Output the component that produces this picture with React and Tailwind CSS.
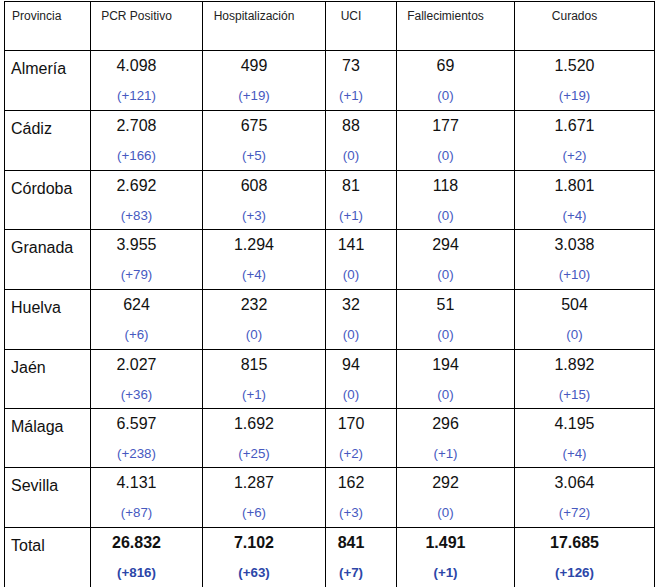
import React from 'react';

const headers = ['PCR Positivo', 'Hospitalización', 'UCI', 'Fallecimientos', 'Curados'];

const rows = [
    { name: 'Almería', h: 'h-[60px]', cells: [['4.098', '+121'], ['499', '+19'], ['73', '+1'], ['69', '0'], ['1.520', '+19']] },
    { name: 'Cádiz', h: 'h-[60px]', cells: [['2.708', '+166'], ['675', '+5'], ['88', '0'], ['177', '0'], ['1.671', '+2']] },
    { name: 'Córdoba', h: 'h-[59px]', cells: [['2.692', '+83'], ['608', '+3'], ['81', '+1'], ['118', '0'], ['1.801', '+4']] },
    { name: 'Granada', h: 'h-[60px]', cells: [['3.955', '+79'], ['1.294', '+4'], ['141', '0'], ['294', '0'], ['3.038', '+10']] },
    { name: 'Huelva', h: 'h-[60px]', cells: [['624', '+6'], ['232', '0'], ['32', '0'], ['51', '0'], ['504', '0']] },
    { name: 'Jaén', h: 'h-[59px]', cells: [['2.027', '+36'], ['815', '+1'], ['94', '0'], ['194', '0'], ['1.892', '+15']] },
    { name: 'Málaga', h: 'h-[59px]', cells: [['6.597', '+238'], ['1.692', '+25'], ['170', '+2'], ['296', '+1'], ['4.195', '+4']] },
    { name: 'Sevilla', h: 'h-[60px]', cells: [['4.131', '+87'], ['1.287', '+6'], ['162', '+3'], ['292', '0'], ['3.064', '+72']] },
];

const total = [['26.832', '+816'], ['7.102', '+63'], ['841', '+7'], ['1.491', '+1'], ['17.685', '+126']];

const cell = 'border-l border-t border-black';

const App = () => {
    return (
        <div className="bg-white h-screen overflow-hidden pt-px pl-1" style={{ fontFamily: '"Liberation Sans", Arial, sans-serif' }}>
            <div className="grid grid-cols-[86px_112px_123px_71px_118px_140px] w-[651px] border-r border-black">
                {/* Header */}
                <div className={`${cell} h-[49px] pl-[7px] pt-[7px] text-[12px] leading-[14px] text-[#222]`}>Provincia</div>
                {headers.map((h) => (
                    <div key={h} className={`${cell} h-[49px] pr-5 pt-[7px] text-center text-[12px] leading-[14px] text-[#222]`}>{h}</div>
                ))}

                {/* Provinces */}
                {rows.map((r) => (
                    <React.Fragment key={r.name}>
                        <div className={`${cell} ${r.h} pl-[6px] pt-[9px] text-[16px] leading-[18px] text-[#111]`}>{r.name}</div>
                        {r.cells.map(([v, d], i) => (
                            <div key={i} className={`${cell} ${r.h} pr-5 pt-[6px] text-center`}>
                                <div className="text-[16px] leading-[18px] text-[#111]">{v}</div>
                                <div className="mt-[13px] text-[13.33px] leading-[15px] text-[#4659bf]">({d})</div>
                            </div>
                        ))}
                    </React.Fragment>
                ))}

                {/* Total */}
                <div className={`${cell} h-[60px] pl-[6px] pt-[9px] text-[16px] leading-[18px] text-[#111]`}>Total</div>
                {total.map(([v, d], i) => (
                    <div key={i} className={`${cell} h-[60px] pr-5 pt-[6px] text-center font-bold`}>
                        <div className="text-[16px] leading-[18px] text-[#111]">{v}</div>
                        <div className="mt-[13px] text-[13.33px] leading-[15px] text-[#2c46a8]">({d})</div>
                    </div>
                ))}
            </div>
        </div>
    );
};

export default App;
